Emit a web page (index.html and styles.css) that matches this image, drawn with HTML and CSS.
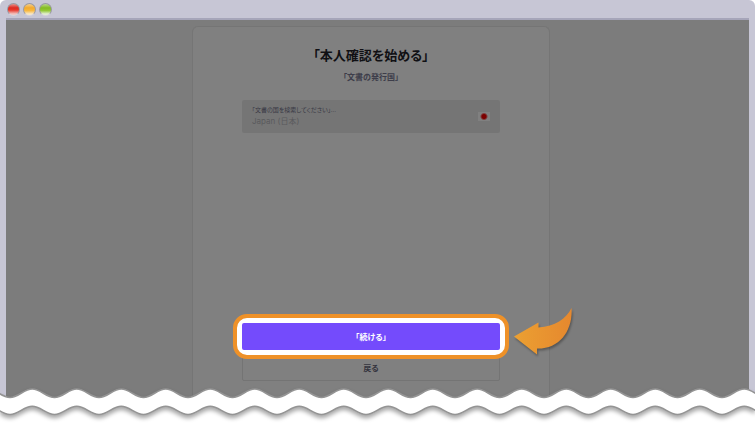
FILE: index.html
```html
<!DOCTYPE html>
<html lang="ja">
<head>
  <meta charset="UTF-8">
  <meta name="viewport" content="width=device-width, initial-scale=1.0">
  <title>本人確認を始める</title>
  <link rel="stylesheet" href="styles.css">
</head>
<body>

  <div class="window">
    <div class="title-bar">
      <span class="dot red"></span>
      <span class="dot yellow"></span>
      <span class="dot green"></span>
    </div>

    <main class="page">
      <form class="card">
        <h1 class="title">「本人確認を始める」</h1>
        <p class="subtitle">「文書の発行国」</p>

        <div class="field">
          <div class="field-text">
            <label for="country">「文書の国を検索してください」...</label>
            <input type="text" id="country" value="Japan (日本)">
          </div>
          <span class="flag"></span>
        </div>

        <div class="highlight">
          <button type="button" class="continue">「続ける」</button>
          <svg class="arrow" viewBox="0 0 64 52" aria-hidden="true">
            <defs>
              <linearGradient id="arrowFill" x1="0" y1="0" x2="1" y2="0">
                <stop offset="0" stop-color="#eba032"/>
                <stop offset="1" stop-color="#e6882e"/>
              </linearGradient>
            </defs>
            <path fill="url(#arrowFill)" d="M1 30.5 L25.5 16.5 L25.5 21.5 C42 20.5 53 13 58.5 2 C60 24 47 43 24 42.5 L24 48.5 Z"/>
          </svg>
        </div>
        <button type="button" class="back">戻る</button>
      </form>
    </main>
  </div>

  <!-- torn edge -->
  <svg class="wave" aria-hidden="true">
    <defs>
      <pattern id="tear" x="10" y="0" width="89" height="46" patternUnits="userSpaceOnUse">
        <path fill="#fff" stroke="#949494" stroke-width="1.5" d="M-44.5 17.5 c8.1 0 14.1 -8.5 22.25 -8.5 s14.1 8.5 22.25 8.5 s14.1 -8.5 22.25 -8.5 s14.1 8.5 22.25 8.5 s14.1 -8.5 22.25 -8.5 s14.1 8.5 22.25 8.5 s14.1 -8.5 22.25 -8.5 s14.1 8.5 22.25 8.5 v17 c-8.1 0 -14.1 -8.2 -22.25 -8.2 s-14.1 8.2 -22.25 8.2 s-14.1 -8.2 -22.25 -8.2 s-14.1 8.2 -22.25 8.2 s-14.1 -8.2 -22.25 -8.2 s-14.1 8.2 -22.25 8.2 s-14.1 -8.2 -22.25 -8.2 s-14.1 8.2 -22.25 8.2 Z"/>
      </pattern>
    </defs>
    <rect width="100%" height="46" fill="url(#tear)"/>
  </svg>

</body>
</html>
```

FILE: styles.css
```css
* {
  box-sizing: border-box;
}

body {
  margin: 0;
  background: #fff;
  font-family: Inter, "Noto Sans CJK JP", sans-serif;
  font-feature-settings: "palt";
  overflow: hidden;
}

.window {
  display: flex;
  flex-direction: column;
  height: calc(100vh - 26px);
  padding: 0 6px;
  background: #c7c6d5;
  border-radius: 6px 6px 0 0;
}

.title-bar {
  display: flex;
  gap: 3px;
  height: 18px;
  padding: 3px 1px;
}

.dot {
  width: 13px;
  height: 13px;
  border: 1px solid #9998a0;
  border-bottom-color: #d8d4dc;
  border-radius: 50%;
}

.red {
  background: linear-gradient(#e8908c 0%, #dd2a22 35%, #e8382c 55%, #f2c4c0 90%);
}

.yellow {
  background: linear-gradient(#f2cf90 0%, #f4aa2c 35%, #f8b840 60%, #f8e6c4 90%);
}

.green {
  background: linear-gradient(#b8d88c 0%, #84bc20 35%, #94c838 60%, #e2eed0 90%);
}

.page {
  flex: 1;
  display: flex;
  justify-content: center;
  padding: 6px 13px 0 0;
  background: #7c7c7c;
  border-top: 2px solid #a6a5b9;
}

.card {
  display: flex;
  flex-direction: column;
  width: 100%;
  max-width: 358px;
  padding: 18px 49px 19px;
  background: #808080;
  border: 1px solid #757575;
  border-bottom: 0;
  border-radius: 6px 6px 0 0;
}

.title {
  margin: 0;
  font-size: 13px;
  line-height: 20px;
  text-align: center;
  color: #101014;
}

.subtitle {
  margin: 6px 0 17px;
  font-size: 8px;
  font-weight: bold;
  line-height: 12px;
  text-align: center;
  color: #3d3d4a;
}

.field {
  display: flex;
  align-items: center;
  height: 33px;
  padding: 0 10px;
  background: #757575;
  border-radius: 2px;
}

.field-text {
  flex: 1;
  display: flex;
  flex-direction: column;
  padding-bottom: 2px;
}

.field label {
  font-size: 6px;
  line-height: 10px;
  color: #383844;
}

.field input {
  height: 12px;
  padding: 0;
  border: 0;
  background: none;
  font-family: inherit;
  font-size: 8px;
  color: #5a5a5d;
}

.flag {
  width: 12px;
  height: 9px;
  background: radial-gradient(circle, #7c0000 2px, #808080 4px);
}

.highlight {
  position: relative;
  z-index: 1;
  margin: auto -9px -5px;
  padding: 5px;
  border: 4px solid #ee9128;
  border-radius: 14px;
  background: #fff;
}

.continue,
.back {
  display: block;
  width: 100%;
  height: 27px;
  padding: 0;
  border-radius: 2px;
  font-family: inherit;
  font-feature-settings: inherit;
  font-size: 8px;
  font-weight: bold;
}

.continue {
  border: 0;
  background: #744bfc;
  color: #fff;
}

.back {
  background: #808080;
  border: 1px solid #747474;
  color: #34343e;
}

.arrow {
  position: absolute;
  left: 100%;
  top: -12px;
  width: 64px;
  height: 52px;
  margin-left: 8px;
  filter: drop-shadow(1px 2px 1px rgba(0, 0, 0, 0.3));
}

.wave {
  position: absolute;
  left: 0;
  bottom: 0;
  width: 100%;
  height: 46px;
  filter: drop-shadow(0 3px 2px rgba(0, 0, 0, 0.35));
}
```
